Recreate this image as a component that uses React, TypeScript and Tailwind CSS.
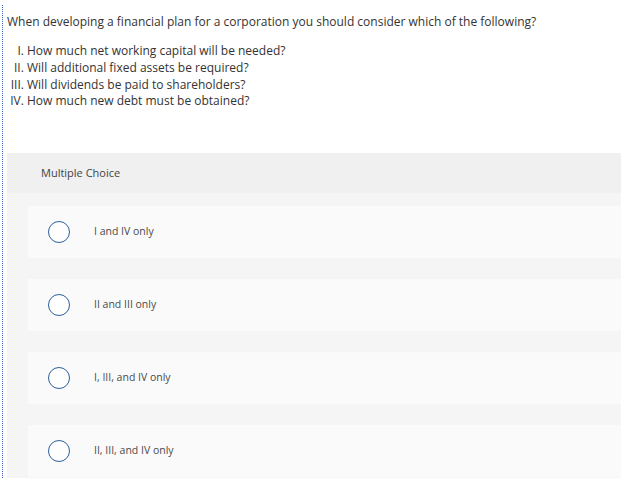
import React from "react";

const options = ["I and IV only", "II and III only", "I, III, and IV only", "II, III, and IV only"];
const items = [
  "How much net working capital will be needed?",
  "Will additional fixed assets be required?",
  "Will dividends be paid to shareholders?",
  "How much new debt must be obtained?",
];

export default function App() {
  return (
    <div className="w-[621px] h-[478px] overflow-hidden bg-white pt-[5px] pl-[2px] font-['Open_Sans',sans-serif] text-[#333]">
      <div className="h-[473px] border-l border-dotted border-[#3a62b4] pl-[4px] pt-[8px]">
        <p className="text-[12px] leading-[17px]">
          When developing a financial plan for a corporation you should consider which of the following?
        </p>
        <ol className="mt-[13px] list-[upper-roman] list-outside pl-[20px] text-[12px] leading-[16.8px]">
          {items.map((t) => (
            <li key={t}>{t}</li>
          ))}
        </ol>
        <div className="mt-[43px] bg-[#f5f5f5] h-[330px]">
          <div className="h-[40px] bg-[#f0f0f0] flex items-center pl-[34px] text-[11px] text-[#444]">
            Multiple Choice
          </div>
          <div className="pt-[13px] pl-[21px] flex flex-col gap-[21px]">
            {options.map((o) => (
              <div key={o} className="h-[52px] bg-[#fafafa] flex items-center pl-[20px]">
                <div className="w-[22px] h-[22px] rounded-full border-[1.5px] border-[#2d5f9c] bg-white shrink-0" />
                <span className="ml-[24px] text-[10.5px] text-[#4a4a4a]">{o}</span>
              </div>
            ))}
          </div>
        </div>
      </div>
    </div>
  );
}
